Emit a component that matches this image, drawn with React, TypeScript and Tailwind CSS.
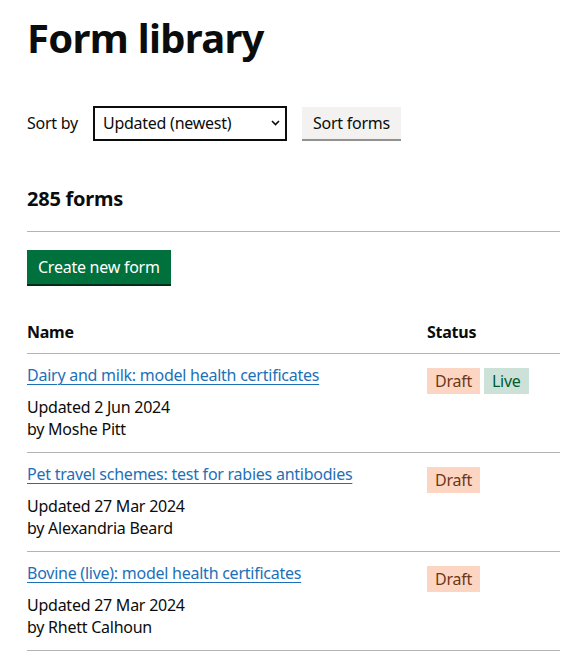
import React from "react";

type Form = {
  name: string;
  updated: string;
  by: string;
  statuses: ("Draft" | "Live")[];
};

const forms: Form[] = [
  { name: "Dairy and milk: model health certificates", updated: "2 Jun 2024", by: "Moshe Pitt", statuses: ["Draft", "Live"] },
  { name: "Pet travel schemes: test for rabies antibodies", updated: "27 Mar 2024", by: "Alexandria Beard", statuses: ["Draft"] },
  { name: "Bovine (live): model health certificates", updated: "27 Mar 2024", by: "Rhett Calhoun", statuses: ["Draft"] },
];

const Tag = ({ status }: { status: "Draft" | "Live" }) =>
  status === "Draft" ? (
    <span className="inline-block h-[26px] px-[8px] leading-[26px] bg-[#fcd6c3] text-[#6e3619]">Draft</span>
  ) : (
    <span className="inline-block h-[26px] px-[8px] leading-[26px] bg-[#cce2d8] text-[#005a30]">Live</span>
  );

export default function App() {
  return (
    <div className="min-h-screen bg-white text-[#0b0c0c] font-['Noto_Sans',sans-serif] text-[16px] tracking-[-0.25px]">
      <div className="ml-[27px] w-[533px] pt-[12px]">
        {/* Heading */}
        <h1 className="text-[40px] leading-[52px] font-bold tracking-[-0.7px]">Form library</h1>

        {/* Sort controls */}
        <form className="mt-[42px] flex items-start gap-[15px]" onSubmit={(e) => e.preventDefault()}>
          <label className="h-[35px] leading-[35px]">Sort by</label>
          <div className="relative">
            <select className="appearance-none w-[194px] h-[35px] border-2 border-[#0b0c0c] pl-[8px] pr-[24px] bg-white leading-[31px] outline-none">
              <option>Updated (newest)</option>
              <option>Updated (oldest)</option>
              <option>Name (A to Z)</option>
            </select>
            <svg className="absolute right-[7px] top-[14px] pointer-events-none" width="9" height="6" viewBox="0 0 9 6">
              <path d="M1 1l3.5 3.5L8 1" fill="none" stroke="#0b0c0c" strokeWidth="1.6" />
            </svg>
          </div>
          <button className="h-[32px] px-[11px] bg-[#f3f2f1] shadow-[0_2px_0_#929191] leading-[32px] mt-[1px]">Sort forms</button>
        </form>

        {/* Count */}
        <h2 className="mt-[45px] text-[20px] leading-[25px] font-bold">285 forms</h2>
        <hr className="mt-[20px] border-t border-[#b1b4b6]" />

        <button className="mt-[18px] h-[34px] px-[11px] bg-[#00703c] text-white shadow-[0_2px_0_#002d18] leading-[34px]">
          Create new form
        </button>

        {/* Table */}
        <div className="mt-[38px]">
          <div className="grid grid-cols-[400px_1fr] pb-[11px] border-b border-[#b1b4b6] font-bold leading-[20px]">
            <div>Name</div>
            <div>Status</div>
          </div>
          {forms.map((f) => (
            <div key={f.name} className="grid grid-cols-[400px_1fr] h-[99px] pt-[10px] border-b border-[#b1b4b6]">
              <div>
                <a href="#" className="block leading-[22px] text-[#1d70b8] underline underline-offset-[3px] decoration-1">
                  {f.name}
                </a>
                <p className="mt-[10px] leading-[22px]">
                  Updated {f.updated}
                  <br />
                  by {f.by}
                </p>
              </div>
              <div className="flex items-start gap-[4px] pt-[4px]">
                {f.statuses.map((s) => (
                  <Tag key={s} status={s} />
                ))}
              </div>
            </div>
          ))}
        </div>
      </div>
    </div>
  );
}
